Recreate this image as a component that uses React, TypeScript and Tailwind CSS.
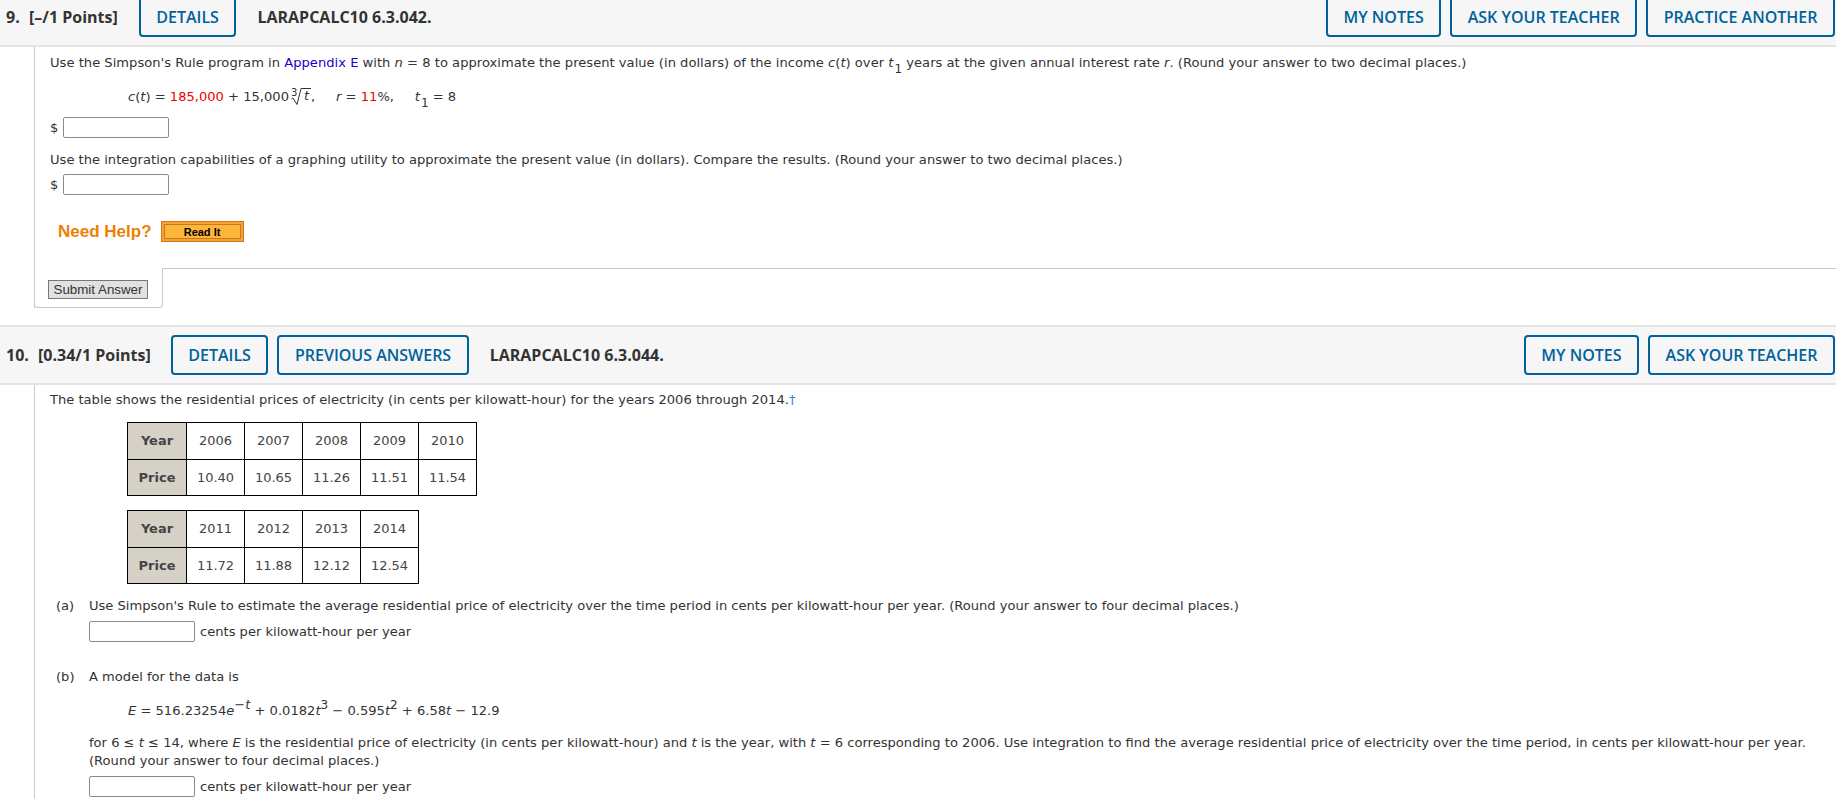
const body = { fontFamily: '"DejaVu Sans", Verdana, sans-serif' };
const head = { fontFamily: '"Open Sans", sans-serif' };
const arial = { fontFamily: '"Liberation Sans", sans-serif' };

function Btn({ children }: { children: string }) {
  return (
    <button
      className="h-10 px-[15.5px] border-2 border-[#00629b] rounded-[4px] text-[16px] font-semibold text-[#00629b] whitespace-nowrap bg-transparent"
      style={head}
    >
      {children}
    </button>
  );
}

function Blank({ w = "w-[106px]" }: { w?: string }) {
  return <span className={`inline-block h-[21px] ${w} border border-[#8a8a8a] rounded-[2px] bg-white align-middle`} />;
}

function I({ children }: { children: string }) {
  return <i className="italic">{children}</i>;
}

function DataTable({ years, prices }: { years: string[]; prices: string[] }) {
  const cell = "w-[58px] h-[36.5px] border border-black text-center text-[13px] font-normal text-[#444] p-0";
  const label = "w-[59px] h-[36.5px] border border-black text-center text-[13px] font-bold text-[#444] bg-[#d6d1c7] p-0";
  return (
    <table className="border-collapse ml-[77px]">
      <tbody>
        <tr>
          <th className={label}>Year</th>
          {years.map((y) => (
            <td key={y} className={cell}>{y}</td>
          ))}
        </tr>
        <tr>
          <th className={label}>Price</th>
          {prices.map((p) => (
            <td key={p} className={cell}>{p}</td>
          ))}
        </tr>
      </tbody>
    </table>
  );
}

export default function App() {
  return (
    <div className="h-[799px] overflow-hidden bg-white text-[13.09px] text-[#333]" style={body}>
      {/* question 9 */}
      <div className="h-[47px] bg-[#f6f6f6] border-b-2 border-[#e4e4e4] flex items-start pl-[6px] pr-[1px]" style={head}>
        <span className="w-[23px] mt-[5px] text-[16px] font-bold text-[#333]">9.</span>
        <span className="mt-[5px] text-[16px] font-bold text-[#333] whitespace-nowrap">[–/1 Points]</span>
        <div className="-mt-[3px] ml-[21px]">
          <Btn>DETAILS</Btn>
        </div>
        <span className="ml-[21px] mt-[5px] text-[16px] font-bold text-[#333]">LARAPCALC10 6.3.042.</span>
        <div className="ml-auto -mt-[3px] flex gap-[9px]">
          <Btn>MY NOTES</Btn>
          <Btn>ASK YOUR TEACHER</Btn>
          <Btn>PRACTICE ANOTHER</Btn>
        </div>
      </div>

      <div className="relative ml-[34px] h-[261px] border-l border-[#c8c8c8] pl-[15px]">
        <p className="pt-[8px] leading-[16px] whitespace-nowrap tracking-[0.02px]">
          Use the Simpson's Rule program in <span className="text-[#2200cc]">Appendix E</span> with <I>n</I> = 8 to approximate the present value (in dollars) of the income <I>c</I>(<I>t</I>) over <I>t</I><sub className="text-[12px] -bottom-[6px] ml-[1px]">1</sub> years at the given annual interest rate <I>r</I>. (Round your answer to two decimal places.)
        </p>
        <p className="mt-[18px] ml-[78px] h-[16px] leading-[16px] whitespace-nowrap flex items-center">
          <I>c</I>(<I>t</I>)&nbsp;=&nbsp;<span className="text-[#ee0000]">185,000</span>&nbsp;+ 15,000
          <span className="relative inline-flex items-start ml-[2px]">
            <span className="absolute top-0 left-0 text-[10px] leading-none">3</span>
            <svg width="12" height="18" viewBox="0 0 12 18">
              <path d="M0.5 11 L2 10 L6 16.5 L10 0.5 L12 0.5" fill="none" stroke="#333" strokeWidth="1" />
            </svg>
            <span className="border-t border-[#333] leading-[14px] pr-[2px] pl-[1px]"><I>t</I></span>
          </span>
          ,&nbsp;&nbsp;&nbsp;&nbsp;&nbsp;<I>r</I>&nbsp;=&nbsp;<span className="text-[#ee0000]">11</span>%,&nbsp;&nbsp;&nbsp;&nbsp;&nbsp;<I>t</I><sub className="text-[12px] -bottom-[6px] ml-[1px]">1</sub>&nbsp;=&nbsp;8
        </p>
        <div className="mt-[12px] h-[21px] flex items-center gap-[5px]">
          <span>$</span>
          <Blank />
        </div>
        <p className="mt-[14px] leading-[16px] whitespace-nowrap">
          Use the integration capabilities of a graphing utility to approximate the present value (in dollars). Compare the results. (Round your answer to two decimal places.)
        </p>
        <div className="mt-[6px] h-[21px] flex items-center gap-[5px]">
          <span>$</span>
          <Blank />
        </div>
        <div className="mt-[24px] ml-[8px] flex items-center gap-[9px]">
          <span className="text-[17px] font-bold text-[#ee7f00]" style={arial}>Need Help?</span>
          <span className="w-[83px] h-[21px] border border-[#c67a1e] bg-[#fba02f] p-[2px] flex">
            <span className="flex-1 border border-[#c67a1e] bg-[#fdb53c] flex items-center justify-center text-[11px] font-bold text-black" style={arial}>Read It</span>
          </span>
        </div>
        <button className="absolute left-[13px] top-[233px] w-[100px] h-[19px] border border-[#777] bg-[#e1e1e1] text-[13.33px] leading-none text-[#333]" style={arial}>
          Submit Answer
        </button>
        <div className="absolute left-0 -ml-px bottom-0 w-[129px] h-[40px] border-b border-r border-l border-[#c8c8c8] rounded-b-[4px]" />
        <div className="absolute left-[127px] top-[221px] right-0 border-t border-[#c8c8c8]" />
      </div>

      <div className="h-[17px]" />

      {/* question 10 */}
      <div className="h-[60px] bg-[#f6f6f6] border-y-2 border-[#e4e4e4] flex items-center pl-[6px] pr-[1px]" style={head}>
        <span className="w-[32px] text-[16px] font-bold text-[#333]">10.</span>
        <span className="text-[16px] font-bold text-[#333] whitespace-nowrap">[0.34/1 Points]</span>
        <div className="ml-[20px] flex gap-[9px]">
          <Btn>DETAILS</Btn>
          <Btn>PREVIOUS ANSWERS</Btn>
        </div>
        <span className="ml-[21px] text-[16px] font-bold text-[#333]">LARAPCALC10 6.3.044.</span>
        <div className="ml-auto flex gap-[9px]">
          <Btn>MY NOTES</Btn>
          <Btn>ASK YOUR TEACHER</Btn>
        </div>
      </div>

      <div className="ml-[34px] h-[420px] border-l border-[#c8c8c8] pl-[15px]">
        <p className="pt-[7px] leading-[16px] whitespace-nowrap">
          The table shows the residential prices of electricity (in cents per kilowatt-hour) for the years 2006 through 2014.<span className="text-[#3b82d6]">†</span>
        </p>
        <div className="mt-[14px]">
          <DataTable years={["2006", "2007", "2008", "2009", "2010"]} prices={["10.40", "10.65", "11.26", "11.51", "11.54"]} />
        </div>
        <div className="mt-[14px]">
          <DataTable years={["2011", "2012", "2013", "2014"]} prices={["11.72", "11.88", "12.12", "12.54"]} />
        </div>
        <div className="mt-[14px] flex">
          <span className="w-[39px] pl-[6px] leading-[16px]">(a)</span>
          <div>
            <p className="leading-[16px] whitespace-nowrap tracking-[-0.015px]">Use Simpson's Rule to estimate the average residential price of electricity over the time period in cents per kilowatt-hour per year. (Round your answer to four decimal places.)</p>
            <div className="mt-[7px] flex items-center gap-[5px]">
              <Blank />
              <span>cents per kilowatt-hour per year</span>
            </div>
          </div>
        </div>
        <div className="mt-[27px] flex">
          <span className="w-[39px] pl-[6px] leading-[16px]">(b)</span>
          <div>
            <p className="leading-[16px]">A model for the data is</p>
            <p className="mt-[18px] ml-[39px] leading-[16px] whitespace-nowrap">
              <I>E</I> = 516.23254<I>e</I><sup className="text-[13px]">−<I>t</I></sup> + 0.0182<I>t</I><sup className="text-[12px]">3</sup> − 0.595<I>t</I><sup className="text-[12px]">2</sup> + 6.58<I>t</I> − 12.9
            </p>
            <p className="mt-[15px] leading-[18px] whitespace-nowrap">
              for 6 ≤ <I>t</I> ≤ 14, where <I>E</I> is the residential price of electricity (in cents per kilowatt-hour) and <I>t</I> is the year, with <I>t</I> = 6 corresponding to 2006. Use integration to find the average residential price of electricity over the time period, in cents per kilowatt-hour per year.
              <br />
              (Round your answer to four decimal places.)
            </p>
            <div className="mt-[6px] flex items-center gap-[5px]">
              <Blank />
              <span>cents per kilowatt-hour per year</span>
            </div>
          </div>
        </div>
      </div>
    </div>
  );
}
